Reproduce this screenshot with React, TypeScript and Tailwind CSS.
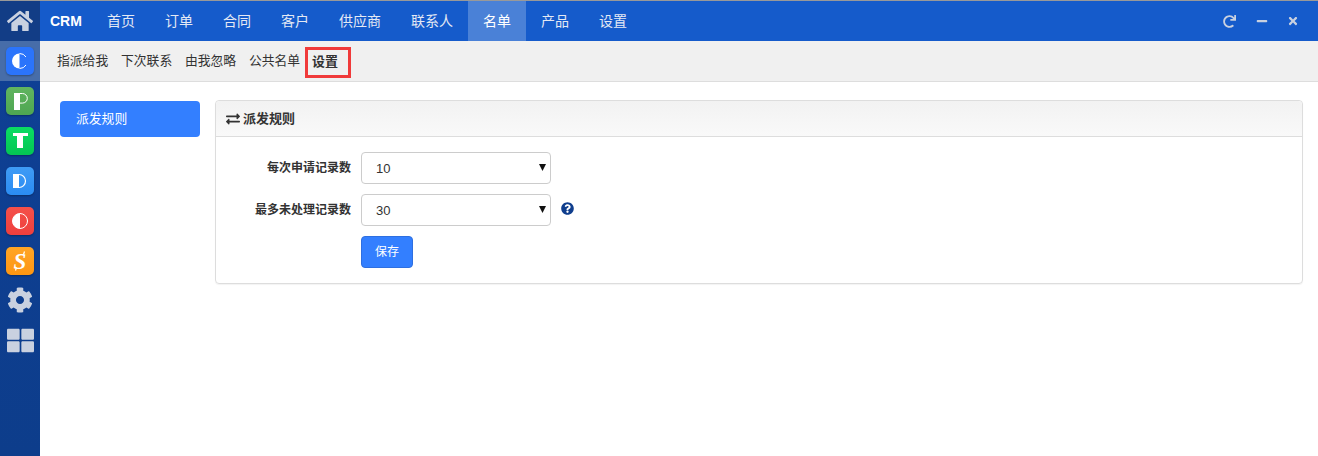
import { FaHome, FaCog, FaThLarge, FaExchangeAlt, FaQuestionCircle, FaRedo, FaMinus, FaTimes } from 'react-icons/fa';

const font = { fontFamily: '"Liberation Sans", "Noto Sans CJK SC", sans-serif' };

const navItems = ['首页', '订单', '合同', '客户', '供应商', '联系人', '名单', '产品', '设置'];
const subItems = ['指派给我', '下次联系', '由我忽略', '公共名单'];

function AppIcon({ bg, children }: { bg: string; children: React.ReactNode }) {
  return (
    <div className={`w-7 h-7 rounded-[5px] overflow-hidden shadow-[0_1px_2px_rgba(0,0,0,0.3)] ${bg}`}>
      <svg width="28" height="28" viewBox="0 0 28 28">
        {children}
      </svg>
    </div>
  );
}

function Sidebar() {
  return (
    <aside className="w-10 shrink-0 bg-gradient-to-b from-[#0f4096] to-[#0d3d8b] flex flex-col items-center">
      <div className="w-full h-10 bg-[#123d86] flex items-center justify-center">
        <FaHome className="text-[#c9d1e0]" size={26} />
      </div>
      <div className="w-full h-10 bg-[#476da9] flex items-center justify-center">
        <AppIcon bg="bg-[#2b74fb]">
          <path d="M13.5 6.5a7.5 7.5 0 0 0 0 15z" fill="#fff" />
          <path d="M13.5 6.5a7.5 7.5 0 0 1 6.5 3.5M13.5 21.5a7.5 7.5 0 0 0 6.5-3.5" fill="none" stroke="#fff" strokeWidth="1" />
        </AppIcon>
      </div>
      <div className="flex flex-col items-center gap-3 pt-1.5">
        <AppIcon bg="bg-gradient-to-b from-[#60b45f] to-[#4ea652]">
          <rect x="8" y="6" width="6" height="17" fill="#fff" />
          <path d="M14 6.5h2.5a4.8 4.8 0 0 1 0 9.6H14" fill="none" stroke="#fff" strokeWidth="1" />
        </AppIcon>
        <AppIcon bg="bg-gradient-to-b from-[#0bdc63] to-[#04c653]">
          <rect x="7" y="6" width="15" height="3" fill="#fff" />
          <rect x="11" y="6" width="6" height="15" fill="#fff" />
        </AppIcon>
        <AppIcon bg="bg-gradient-to-b from-[#3f9bf5] to-[#2a8cf3]">
          <rect x="7" y="7" width="6" height="14" fill="#fff" />
          <path d="M13 7.5a6.5 6.5 0 0 1 0 13" fill="none" stroke="#fff" strokeWidth="1.2" />
        </AppIcon>
        <AppIcon bg="bg-gradient-to-b from-[#f4504a] to-[#ef3f3d]">
          <circle cx="14" cy="14" r="7.5" fill="none" stroke="#fff" strokeWidth="1" />
          <path d="M14 6.5a7.5 7.5 0 0 0 0 15z" fill="#fff" />
        </AppIcon>
        <AppIcon bg="bg-gradient-to-b from-[#ffa526] to-[#fd9611]">
          <text x="14" y="22" textAnchor="middle" fill="#fff" fontSize="23" fontWeight="bold" fontStyle="italic" fontFamily='"Liberation Serif", serif'>S</text>
          <path d="M18.5 4.5l-1 3M10.5 20.5l-1 3" stroke="#fff" strokeWidth="1.2" />
        </AppIcon>
        <FaCog className="text-[#c9d1e0]" size={26} />
        <FaThLarge className="text-[#c9d1e0] mt-0.5" size={27} />
      </div>
    </aside>
  );
}

function Select({ value }: { value: string }) {
  return (
    <div className="relative w-[190px] h-8">
      <select
        defaultValue={value}
        className="w-full h-full appearance-none bg-white border border-[#ccc] rounded-[4px] pl-[14px] pt-px text-[13px] text-[#333] outline-none"
      >
        <option>{value}</option>
      </select>
      <svg className="absolute right-[5px] top-[11px]" width="7" height="8" viewBox="0 0 7 8">
        <path d="M0 1h7L3.5 8z" fill="#111" />
      </svg>
    </div>
  );
}

function Label({ children }: { children: React.ReactNode }) {
  return <label className="w-[135px] text-right text-[12px] font-bold text-[#333] mr-2.5">{children}</label>;
}

export default function App() {
  return (
    <div className="h-[456px] w-[1318px] overflow-hidden bg-white flex flex-col text-[#333]" style={font}>
      <div className="h-px bg-[#999] shrink-0" />
      <div className="flex flex-1 min-h-0">
        <Sidebar />
        <div className="flex-1 flex flex-col min-w-0">
          <header className="h-10 bg-[#155bcb] flex items-center text-[#e4e9f4] shrink-0">
            <div className="w-[52px] pl-2.5 text-white font-bold text-[14px]">CRM</div>
            <nav className="flex h-full">
              {navItems.map(item => (
                <a
                  key={item}
                  className={`px-[15px] h-full flex items-center text-[14px] ${item === '名单' ? 'bg-[#4a81d7] text-white' : ''}`}
                >
                  {item}
                </a>
              ))}
            </nav>
            <div className="ml-auto flex items-center gap-[19px] pr-[19px] text-[#c9d1e0]">
              <FaRedo className="mr-px" size={13} />
              <FaMinus size={12} />
              <FaTimes size={12} />
            </div>
          </header>

          <div className="h-[41px] bg-[#f0f0f0] border-b border-[#ddd] flex items-center gap-[12.8px] pl-[17px] shrink-0">
            {subItems.map(item => (
              <a key={item} className="text-[12.8px] text-[#333]">{item}</a>
            ))}
            <div className="h-[31px] w-[46px] -ml-2 border-[3px] border-[#f03a3a] flex items-center pl-1 pb-0.5 mt-[3px]">
              <span className="text-[13px] font-bold text-[#333]">设置</span>
            </div>
          </div>

          <main className="flex-1 flex items-start pt-[18px] pl-5 pr-[15px] gap-[15px]">
            <div className="w-[140px] h-9 mt-px bg-[#337fff] rounded-[4px] text-white text-[12.8px] flex items-center pl-4">
              派发规则
            </div>
            <section className="flex-1 h-[184px] border border-[#ddd] rounded-[4px] shadow-[0_1px_1px_rgba(0,0,0,0.05)]">
              <div className="h-9 bg-gradient-to-b from-[#f2f2f2] to-[#f9f9f9] border-b border-[#ddd] rounded-t-[4px] flex items-center pl-2.5 gap-[3px] text-[13px] font-bold">
                <FaExchangeAlt size={14} />
                <span>派发规则</span>
              </div>
              <div className="flex flex-col gap-2.5 pt-[15px]">
                <div className="flex items-center">
                  <Label>每次申请记录数</Label>
                  <Select value="10" />
                </div>
                <div className="flex items-center">
                  <Label>最多未处理记录数</Label>
                  <Select value="30" />
                  <FaQuestionCircle className="text-[#0f3e8d] ml-2.5 -mt-1" size={13} />
                </div>
                <div className="pl-[145px]">
                  <button className="w-[52px] h-8 bg-[#337fff] border border-[#2e6fe0] rounded-[4px] text-white text-[12px]">保存</button>
                </div>
              </div>
            </section>
          </main>
        </div>
      </div>
    </div>
  );
}
